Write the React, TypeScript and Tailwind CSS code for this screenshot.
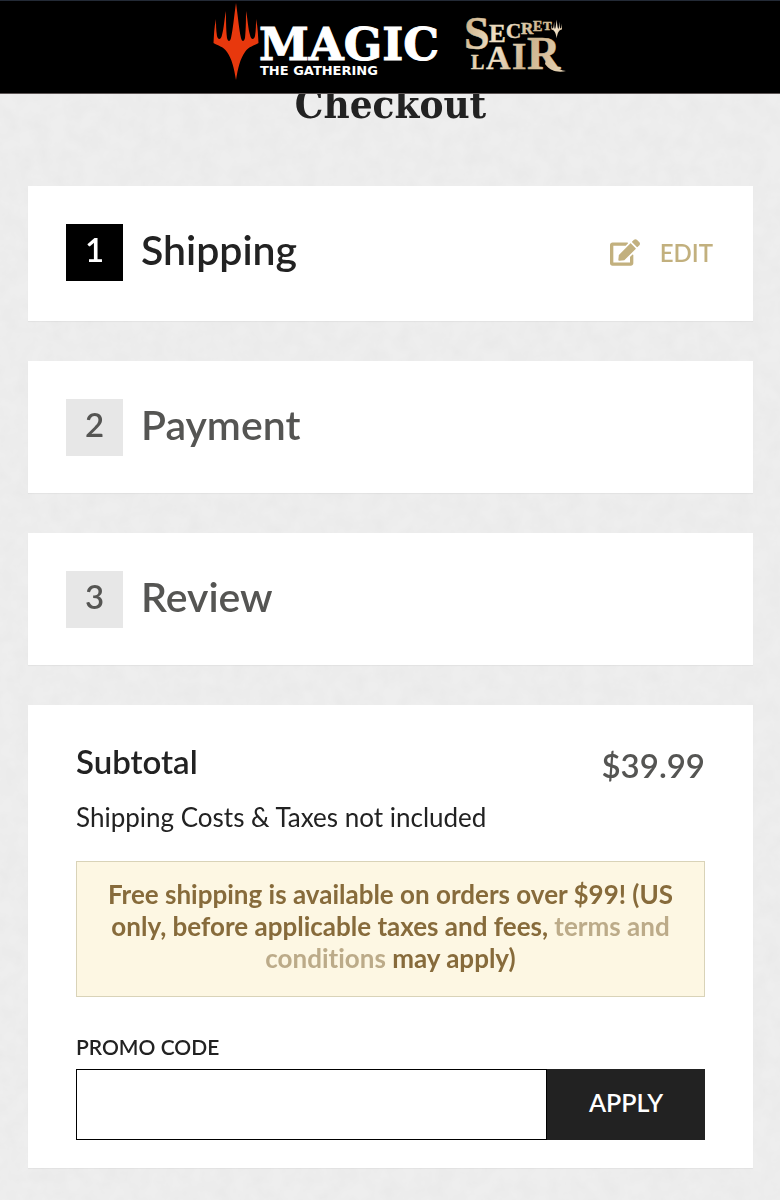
import { useState } from "react";
import { FaEdit } from "react-icons/fa";
import clsx from "clsx";

type Step = {
  id: number;
  label: string;
  done: boolean;
};

const steps: Step[] = [
  { id: 1, label: "Shipping", done: true },
  { id: 2, label: "Payment", done: false },
  { id: 3, label: "Review", done: false },
];

const PLANESWALKER =
  "M36 3 C34 17 33 29 31 38 C30 42 28 42 27 38 C26 29 26 18 26 11 C24 21 24 28 22 35 C21 40 18 40 17 36 C16 30 16 24 16 19 C14 28 14 36 13.500 43 C18 46 23 46 27 52 C32 59 34 68 36 80 C38 68 40 59 45 52 C49 46 54 46 58.500 43 C58 36 58 28 56 19 C56 24 56 30 55 36 C54 40 51 40 50 35 C48 28 48 21 46 11 C46 18 46 29 45 38 C44 42 42 42 41 38 C39 29 38 17 36 3 Z";

function MagicLogo() {
  return (
    <svg width="230" height="84" viewBox="0 0 230 84" role="img" aria-label="Magic: The Gathering">
      <path d={PLANESWALKER} transform="translate(-13 -1)" fill="#e8380d" />
      <text
        x="46"
        y="59"
        fill="#fff"
        stroke="#fff"
        fontSize="45"
        fontWeight="700"
        fontFamily="'DejaVu Serif', serif"
      >
        MAGIC
      </text>
      <text x="47" y="74" fill="#fff" fontSize="13" fontWeight="700" fontFamily="'DejaVu Sans', sans-serif">
        THE GATHERING
      </text>
    </svg>
  );
}

function SecretLairLogo() {
  return (
    <svg
      width="104"
      height="84"
      viewBox="0 0 104 84"
      role="img"
      aria-label="Secret Lair"
      fontFamily="'Liberation Serif', serif"
      fontWeight="700"
    >
      <defs>
        <linearGradient id="gold" gradientUnits="userSpaceOnUse" x1="0" y1="20" x2="104" y2="60">
          <stop offset="0" stopColor="#c9ad84" />
          <stop offset="0.35" stopColor="#f3e4cb" />
          <stop offset="0.65" stopColor="#cdb48f" />
          <stop offset="1" stopColor="#e6d3b4" />
        </linearGradient>
      </defs>
      <g fill="url(#gold)">
        <text stroke="url(#gold)" strokeWidth="0.5">
          <tspan x="1" y="48" fontSize="46">S</tspan>
          <tspan x="26" y="41" fontSize="25">E</tspan>
          <tspan x="43" y="37" fontSize="21">C</tspan>
          <tspan x="58" y="33" fontSize="17">R</tspan>
          <tspan x="70" y="30" fontSize="14">E</tspan>
          <tspan x="80" y="29" fontSize="13">T</tspan>
        </text>
        <text stroke="url(#gold)" strokeWidth="0.5">
          <tspan x="8" y="68" fontSize="20">L</tspan>
          <tspan x="23" y="68" fontSize="34">A</tspan>
          <tspan x="49" y="68" fontSize="37">I</tspan>
          <tspan x="64" y="68" fontSize="46">R</tspan>
        </text>
        <path d="M84 54 C88 63 94 69 103 70 C95 72 87 70 82 63 Z" />
        <path d={PLANESWALKER} transform="translate(85 18) scale(.24)" />
      </g>
    </svg>
  );
}

function Header() {
  return (
    <header className="fixed inset-x-0 top-0 z-10 flex h-[94px] justify-center gap-5 border-t border-b border-t-[#232a36] border-b-[#5c5555] bg-black">
      <a href="#magic">
        <MagicLogo />
      </a>
      <a href="#secret-lair">
        <SecretLairLogo />
      </a>
    </header>
  );
}

// faint paper grain behind the cards
function PaperTexture() {
  return (
    <svg className="fixed inset-0 -z-10 h-full w-full" aria-hidden="true">
      <filter id="paper">
        <feTurbulence type="fractalNoise" baseFrequency="0.060" numOctaves="3" seed="4" />
        <feColorMatrix values="0 0 0 0 0.700  0 0 0 0 0.700  0 0 0 0 0.700  0.350 0 0 0 -0.100" />
      </filter>
      <rect width="100%" height="100%" fill="#eeeeee" />
      <rect width="100%" height="100%" filter="url(#paper)" />
    </svg>
  );
}

function StepCard({ step }: { step: Step }) {
  return (
    <section
      className={clsx(
        "flex items-start bg-white pl-[38px] pr-10 pt-[38px] shadow-[0_1px_1px_rgba(0,0,0,0.04)]",
        step.done ? "pb-10" : "pb-[37px]"
      )}
    >
      <span
        className={clsx(
          "h-[57px] w-[57px] text-center text-[33px] leading-[51px] font-semibold",
          step.done ? "bg-black text-white" : "bg-[#e7e7e7] text-[#555553]"
        )}
      >
        {step.id}
      </span>
      <h2
        className={clsx(
          "ml-[18px] text-[41px] leading-[52px] font-semibold",
          step.done ? "text-[#222]" : "text-[#555553]"
        )}
      >
        {step.label}
      </h2>
      {step.done && (
        <button type="button" className="ml-auto flex h-[57px] items-center gap-5 text-2xl font-semibold text-[#c2b07e]">
          <FaEdit className="h-[27px] w-[30px]" />
          EDIT
        </button>
      )}
    </section>
  );
}

function Summary() {
  const [code, setCode] = useState("");

  return (
    <section className="bg-white px-12 pt-9 pb-7 shadow-[0_1px_1px_rgba(0,0,0,0.04)]">
      <div className="flex items-start justify-between font-semibold">
        <h2 className="text-[33px] leading-10 text-[#222]">Subtotal</h2>
        <span className="pt-1 text-[33px] leading-10 text-[#555553]">$39.99</span>
      </div>
      <p className="mt-3 text-[26px] leading-10 text-[#222]">Shipping Costs &amp; Taxes not included</p>

      <p className="mt-6 border border-[#d9d3b8] bg-[#fdf7e3] px-5 pt-4 pb-[22px] text-center text-[26px] leading-8 font-bold text-[#876b3b]">
        Free shipping is available on orders over $99! (US only, before applicable taxes and fees,{" "}
        <a href="#terms" className="text-[#bcab89]">
          terms and conditions
        </a>{" "}
        may apply)
      </p>

      <form className="mt-[34px]" onSubmit={(e) => e.preventDefault()}>
        <label htmlFor="promo" className="block text-[21px] leading-8 font-semibold text-[#222]">
          PROMO CODE
        </label>
        <div className="mt-1.5 flex h-[71px]">
          <input
            id="promo"
            value={code}
            onChange={(e) => setCode(e.target.value)}
            className="min-w-0 flex-1 border border-black bg-white px-4 text-[26px] outline-none"
          />
          <button type="submit" className="w-[158px] bg-[#222] pb-1 text-[25px] font-semibold text-white">
            APPLY
          </button>
        </div>
      </form>
    </section>
  );
}

export default function App() {
  return (
    <div className="font-[Lato,'Open_Sans',sans-serif] [font-variant-ligatures:none]">
      <PaperTexture />
      <Header />
      <main className="flex flex-col gap-10 pt-20 pr-[27px] pb-8 pl-7">
        <h1 className="mb-[18px] text-center font-['DejaVu_Serif_Condensed','DejaVu_Serif',serif] text-[40px] leading-[48px] font-bold text-[#222]">
          Checkout
        </h1>
        {steps.map((step) => (
          <StepCard key={step.id} step={step} />
        ))}
        <Summary />
      </main>
    </div>
  );
}
